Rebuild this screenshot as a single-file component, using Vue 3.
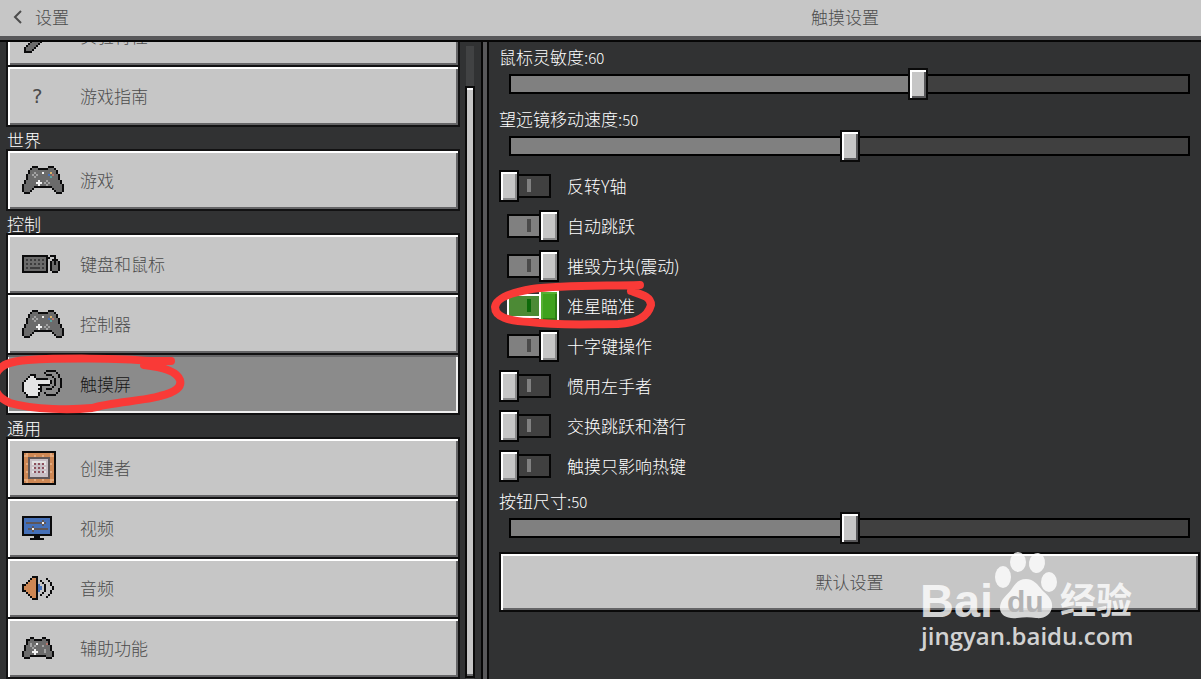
<script setup>
import { ref, reactive } from 'vue'

// one letter = one 2x2 block of the sprite
const palette = {
  k: '#0b0b0c', g: '#6b6b6b', l: '#a3a3a3', w: '#f2f2f2', d: '#3c3c3d',
  y: '#d9b36a', r: '#b5756a', b: '#4570b8', c: '#5fa3a0', o: '#cd8754',
  n: '#e3a97c', m: '#5f5657', p: '#c9c0c6', q: '#8c4f5c', h: '#e4e4e4'
}

const gamepad = [
  '.....kkk.....kkk.....',
  '....kgggkkkkkgggk....',
  '...kgggggggggggggk...',
  '...kgglgggwgggyggk...',
  '..kgglglgggggbgrggk..',
  '..kggglgggggggcgggk..',
  '..kgggggggggggggggk..',
  '.kggggggwggglggggggk.',
  '.kgggggwwwglglgggggk.',
  'kgggggggwggglgggggggk',
  'kgggggkkkkkkkkkgggggk',
  'kggggk.........kggggk',
  'kgggk...........kgggk',
  '.kkk.............kkk.'
]

const sprites = {
  gamepad,
  pencil: [
    '...............kkk',
    '..............kgggk',
    '.............kggggk',
    '............kggggk.',
    '...........kggggk..',
    '..........kggggk...',
    '.........kggggk....',
    '........kggggk.....',
    '.......kggggk......',
    '......kggggk.......',
    '.....kggggk........',
    '....kggggk.........',
    '...kggggk..........',
    '..kggggk...........',
    '.kggggk............',
    '.kgggk.............',
    '.kkkk..............'
  ],
  keyboard: [
    'kkkkkkkkkkkkk.kkk..',
    'kgggggggggggkk..k..',
    'kgdgdgdgdgdgk..kkk.',
    'kgggggggggggk.kgkgk',
    'kgdgdgdgdgdgk.kgkgk',
    'kgggggggggggk.kgggk',
    'kgdgdddddgdgk.kgggk',
    'kgggggggggggk.kgggk',
    'kkkkkkkkkkkkk..kkk.'
  ],
  touch: [
    '............kkkkk...',
    '...........k.....k..',
    '....kkk.....kkk...k.',
    '...khhk........k..k.',
    '..khhhhkkkkkk...k..k',
    '.khhhhhhhhhhhhk.k..k',
    'khhhhhhhhhhhhhk.k..k',
    'khhhhhhhkkkkkk..k..k',
    'khhhhhhhhk.....k...k',
    'khhhhhhhkk..kkk...k.',
    'khhhhhhhhk........k.',
    '.khhhhhhk..k.....k..',
    '..khhhhhk...kkkkk...',
    '..kkkkkk............'
  ],
  creator: [
    'kkkkkkkkkkkkkkkkk',
    'konooooooooooonok',
    'knnooonooonooonnk',
    'koommmmmmmmmmmook',
    'koompppppppppmook',
    'koomphhhhhhhpmook',
    'konmphqpqpqhpmnok',
    'koompppppppppmook',
    'koomphqpqpqhpmook',
    'koompppppppppmook',
    'konmphqpqpqhpmnok',
    'koompppppppppmook',
    'koompppppppppmook',
    'koommmmmmmmmmmook',
    'knnooonooonooonnk',
    'konooooooooooonok',
    'kkkkkkkkkkkkkkkkk'
  ],
  monitor: [
    'kkkkkkkkkkkkkkk',
    'kbbbbbbbbbbbbbk',
    'kbbbbbbbbbmbbbk',
    'kbmmmmmmmmwmbbk',
    'kbbbbbbbbbmbbbk',
    'kbbbbmbbbbbbbbk',
    'kbbmmwmmmmmmmbk',
    'kbbbbmbbbbbbbbk',
    'kbbbbbbbbbbbbbk',
    'kkkkkkkkkkkkkkk',
    '......kkk......',
    '....kkkkkkk....'
  ],
  speaker: [
    '.....kkk........',
    '....kook....k...',
    '...koook.k...k..',
    '..kooook..k...k.',
    'kkoooookb..k..k.',
    'kooooookbb.k...k',
    'kooooookbb.k...k',
    'kkoooookb..k..k.',
    '..kooook..k...k.',
    '...koook.k...k..',
    '....kook....k...',
    '.....kkk........'
  ],
  smallpad: [
    '....kk....kk....',
    '..kkggkkkkggkk..',
    '..kggggggggggk..',
    '..kglggwggggrk..',
    '.kgglglggglgggk.',
    '.kggglggggggggk.',
    '.kggggwgggglggk.',
    'kggggwwwggglgggk',
    'kgggggwggggggggk',
    'kgggkkkkkkkkgggk',
    '.kkk........kkk.'
  ]
}

function cells(name) {
  const list = []
  sprites[name].forEach((row, y) => {
    ;[...row].forEach((ch, x) => {
      if (ch !== '.') list.push({ x, y, fill: palette[ch] })
    })
  })
  return list
}

function box(name) {
  return { w: Math.max(...sprites[name].map((r) => r.length)), h: sprites[name].length }
}

const groups = [
  {
    title: '',
    items: [
      { id: 'features', label: '实验特性', icon: 'pencil' },
      { id: 'guide', label: '游戏指南', icon: '' }
    ]
  },
  { title: '世界', items: [{ id: 'game', label: '游戏', icon: 'gamepad' }] },
  {
    title: '控制',
    items: [
      { id: 'keyboard', label: '键盘和鼠标', icon: 'keyboard' },
      { id: 'controller', label: '控制器', icon: 'gamepad' },
      { id: 'touch', label: '触摸屏', icon: 'touch' }
    ]
  },
  {
    title: '通用',
    items: [
      { id: 'creator', label: '创建者', icon: 'creator' },
      { id: 'video', label: '视频', icon: 'monitor' },
      { id: 'audio', label: '音频', icon: 'speaker' },
      { id: 'access', label: '辅助功能', icon: 'smallpad' }
    ]
  }
]

const current = ref('touch')

const topSliders = reactive([
  { id: 'sensitivity', label: '鼠标灵敏度', value: 60 },
  { id: 'spyglass', label: '望远镜移动速度', value: 50 }
])
const sizeSlider = reactive({ id: 'size', label: '按钮尺寸', value: 50 })

const toggles = reactive([
  { id: 'invert', label: '反转Y轴', on: false },
  { id: 'jump', label: '自动跳跃', on: true },
  { id: 'vibrate', label: '摧毁方块(震动)', on: true },
  { id: 'crosshair', label: '准星瞄准', on: true, active: true },
  { id: 'dpad', label: '十字键操作', on: true },
  { id: 'lefty', label: '惯用左手者', on: false },
  { id: 'swap', label: '交换跳跃和潜行', on: false },
  { id: 'hotbar', label: '触摸只影响热键', on: false }
])

function reset() {
  topSliders[0].value = 60
  topSliders[1].value = 50
  sizeSlider.value = 50
}
</script>

<template>
  <div class="screen">
    <header class="topbar">
      <button class="back">
        <svg width="10" height="14" viewBox="0 0 10 14" aria-hidden="true">
          <path d="M8 1 L2 7 L8 13" fill="none" stroke="#4c4c4c" stroke-width="2" />
        </svg>
        <span>设置</span>
      </button>
      <h1 class="title">触摸设置</h1>
    </header>

    <div class="body">
      <aside class="sidebar">
        <nav class="list">
          <section v-for="group in groups" :key="group.title" class="group">
            <h2 v-if="group.title" class="group-title">{{ group.title }}</h2>
            <button
              v-for="item in group.items"
              :key="item.id"
              class="nav-item"
              :class="{ selected: current === item.id }"
              @click="current = item.id"
            >
              <span class="icon">
                <svg
                  v-if="item.icon"
                  :width="box(item.icon).w * 2"
                  :height="box(item.icon).h * 2"
                  :viewBox="`0 0 ${box(item.icon).w} ${box(item.icon).h}`"
                  shape-rendering="crispEdges"
                >
                  <rect
                    v-for="c in cells(item.icon)"
                    :key="c.x + '-' + c.y"
                    :x="c.x"
                    :y="c.y"
                    width="1"
                    height="1"
                    :fill="c.fill"
                  />
                </svg>
                <span v-else class="question">?</span>
              </span>
              <span>{{ item.label }}</span>
            </button>
          </section>
        </nav>
        <div class="scrollbar"><div class="scroll-thumb"></div></div>
      </aside>

      <main class="pane">
        <div v-for="s in topSliders" :key="s.id" class="field">
          <label :for="s.id">{{ s.label }}:<span class="value">{{ s.value }}</span></label>
          <input :id="s.id" v-model="s.value" type="range" class="slider" :style="{ '--fill': s.value / 100 }" />
        </div>

        <label v-for="t in toggles" :key="t.id" class="toggle-row">
          <input v-model="t.on" type="checkbox" class="toggle" :class="{ active: t.active }" />
          <span>{{ t.label }}</span>
        </label>

        <div class="field">
          <label :for="sizeSlider.id">{{ sizeSlider.label }}:<span class="value">{{ sizeSlider.value }}</span></label>
          <input
            :id="sizeSlider.id"
            v-model="sizeSlider.value"
            type="range"
            class="slider"
            :style="{ '--fill': sizeSlider.value / 100 }"
          />
        </div>

        <button class="reset" @click="reset">默认设置</button>
      </main>
    </div>

    <!-- hand-drawn marker rings -->
    <svg class="marks" width="700" height="430" viewBox="0 0 700 430" aria-hidden="true">
      <path d="M171 361 L150 361 C120 358 60 358 28 360 C10 361 0 365 -4 374 C-8 388 -4 397 10 403 C34 410 72 410 92 408 C112 402 144 401 160 396 C176 392 182 387 180 380 C177 371 162 367 144 365" />
      <path d="M640 285 C600 286 560 285 532 289 C508 293 496 299 495 307 C495 317 508 321 530 322 C560 326 590 324 618 324 C638 323 648 316 651 305 C651 297 643 295 631 291" />
    </svg>

    <svg class="watermark" width="225" height="107" viewBox="0 0 225 107" aria-hidden="true">
      <g fill="#ffffff" fill-opacity="0.8">
        <text x="5" y="69" class="wm-latin" font-size="47">Bai</text>
        <ellipse cx="88" cy="29" rx="8" ry="11" />
        <ellipse cx="103" cy="14" rx="8" ry="10" />
        <ellipse cx="122" cy="15" rx="8" ry="10" transform="rotate(8 122 15)" />
        <ellipse cx="134" cy="34" rx="8" ry="10" />
        <path d="M111 31 C119 31 123 37 127 42 C132 47 138 51 137 59 C136 67 129 71 121 70 C115 69 109 69 102 70 C93 71 85 68 85 60 C85 52 91 48 96 42 C100 36 103 31 111 31 Z" />
        <text x="145" y="66" class="wm-cjk" font-size="36">经验</text>
        <text x="6" y="97" class="wm-url" font-size="24">jingyan.baidu.com</text>
      </g>
      <text x="92" y="64" class="wm-latin" font-size="30" fill="#b4b4b5">du</text>
    </svg>
  </div>
</template>

<style>
body {
  background: #313233;
}
</style>

<style scoped>
.screen {
  --side: round(up, 40.7vw, 1px);
  position: relative;
  display: flex;
  flex-direction: column;
  height: 100vh;
  overflow: hidden;
  background: #313233;
  color: #ffffff;
  font-family: "Noto Sans CJK SC", sans-serif;
  font-size: 17px;
  font-weight: 300;
  line-height: 22px;
}

button {
  font: inherit;
  cursor: pointer;
}

.topbar {
  display: grid;
  grid-template-columns: var(--side) 1fr;
  align-items: center;
  padding: 6px 0 8px;
  flex: none;
  background: #c6c6c6;
  border-bottom: 4px solid #58585a;
  color: #4c4c4c;
}

.back {
  display: flex;
  align-items: center;
  gap: 12px;
  padding: 0 0 0 13px;
  border: none;
  background: none;
  color: inherit;
}

.title {
  margin: 0;
  font-size: 17px;
  font-weight: 300;
  text-align: center;
}

.body {
  display: grid;
  grid-template-columns: var(--side) 1fr;
  flex: 1;
  min-height: 0;
  border-top: 2px solid #060606;
}

.sidebar {
  display: flex;
  gap: 5px;
  min-height: 0;
  padding: 0 12px 0 6px;
  overflow: hidden;
  border-right: 2px solid #060606;
  box-shadow: inset -4px 0 #58585a, inset -6px 0 #060606;
}

.list {
  flex: 1;
  margin-top: -37px;
}

.group-title {
  margin: 0;
  padding: 4px 0 0 1px;
  font-size: 17px;
  font-weight: 300;
  line-height: 18px;
}

.nav-item {
  display: flex;
  align-items: center;
  width: 100%;
  height: 62px;
  padding: 0 14px;
  border: 2px solid #121213;
  background: #c6c6c6;
  box-shadow: inset 2px 2px #ffffff, inset -2px -2px #656567;
  color: #4c4c4c;
  text-align: left;
}

.nav-item + .nav-item {
  margin-top: -2px;
}

.nav-item.selected {
  background: #8b8b8b;
  box-shadow: inset 0 2px #656567, inset 1px 0 #f0f0f0, inset -2px -2px #f0f0f0;
  color: #161616;
}

.icon {
  display: flex;
  align-items: center;
  flex: none;
  width: 58px;
}

.question {
  width: 30px;
  font-family: "DejaVu Sans Mono", monospace;
  font-size: 20px;
  text-align: center;
}

.scrollbar {
  width: 10px;
  margin-top: 4px;
  padding-top: 40px;
  background: linear-gradient(#414243, #414243) center / 8px 100% no-repeat;
}

.scroll-thumb {
  box-sizing: border-box;
  height: calc(100% - 1px);
  border: 2px solid #0a0a0a;
  background: #c6c6c6;
  box-shadow: inset 0 2px #ffffff, inset 0 -2px #656567;
}

.pane {
  display: flex;
  flex-direction: column;
  gap: 8px;
  padding: 4px 1px 0 10px;
}

.field {
  display: flex;
  flex-direction: column;
}

.value {
  font-size: 15px;
  line-height: 15px;
}

.slider {
  appearance: none;
  width: 100%;
  height: 32px;
  margin: 0;
  background:
    linear-gradient(#808080, #808080) 12px center / calc((100% - 24px) * var(--fill)) 16px no-repeat,
    linear-gradient(#404040, #404040) center / calc(100% - 24px) 16px no-repeat,
    linear-gradient(#000000, #000000) center / calc(100% - 20px) 20px no-repeat;
}

.slider::-webkit-slider-thumb {
  appearance: none;
  box-sizing: border-box;
  width: 20px;
  height: 32px;
  border: 2px solid #0a0a0a;
  background: #c6c6c6;
  box-shadow: inset 2px 2px #ffffff, inset -2px -2px #58585a;
}

.toggle-row {
  display: flex;
  align-items: center;
  gap: 8px;
  height: 32px;
}

.toggle {
  --edge: #050505;
  --track: #404040;
  --tick: #808080;
  appearance: none;
  position: relative;
  flex: none;
  width: 60px;
  height: 32px;
  margin: 0;
  background:
    linear-gradient(var(--tick), var(--tick)) 28px 9px / 4px 13px no-repeat,
    linear-gradient(var(--track), var(--track)) 10px center / 40px 20px no-repeat,
    linear-gradient(var(--edge), var(--edge)) 8px center / 44px 24px no-repeat;
}

.toggle::before {
  content: "";
  position: absolute;
  top: 0;
  left: 0;
  box-sizing: border-box;
  width: 20px;
  height: 32px;
  border: 2px solid var(--edge);
  background: #c6c6c6;
  box-shadow: inset 2px 2px #ffffff, inset -2px -2px #8a8a8b;
}

.toggle:checked {
  --track: #808080;
  --tick: #4a4a4a;
}

.toggle:checked::before {
  left: 40px;
}

.toggle.active {
  --edge: #ffffff;
  --track: #4c8a35;
  --tick: #0d6a0a;
}

.toggle.active::before {
  background: #3fa21d;
  box-shadow: inset 2px 2px #55b032, inset -2px -2px #2c7d14;
}

.reset {
  height: 60px;
  border: 2px solid #0a0a0a;
  background: #c6c6c6;
  box-shadow: inset 2px 2px #ffffff, inset -2px -2px #656567;
  color: #4c4c4c;
}

.marks {
  position: absolute;
  top: 0;
  left: 0;
  pointer-events: none;
  fill: none;
  stroke: #f93a37;
  stroke-width: 8;
  stroke-linecap: round;
  stroke-linejoin: round;
}

.watermark {
  position: absolute;
  right: 61px;
  bottom: 24px;
  pointer-events: none;
}

.wm-latin {
  font-family: "Liberation Sans", sans-serif;
  font-weight: 700;
}

.wm-cjk {
  font-family: "Noto Sans CJK SC", sans-serif;
  font-weight: 700;
}

.wm-url {
  font-family: "Open Sans", "Noto Sans", sans-serif;
  font-weight: 600;
}
</style>
